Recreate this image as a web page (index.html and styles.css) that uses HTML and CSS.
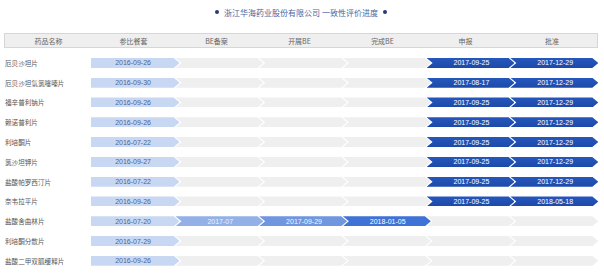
FILE: index.html
```html
<!DOCTYPE html>
<html lang="zh">
<head>
<meta charset="utf-8">
<link rel="stylesheet" href="styles.css">
</head>
<body>
<div class="page">
  <div class="title"><span class="dot"></span><span>浙江华海药业股份有限公司 一致性评价进度</span><span class="dot"></span></div>
  <div class="head">
    <div>药品名称</div><div>参比餐套</div><div>BE备案</div><div>开展BE</div><div>完成BE</div><div>申报</div><div>批准</div>
  </div>
  <div class="rows">
    <div class="row"><div class="name">厄贝沙坦片</div><div class="cv first lb">2016-09-26</div><div class="cv g"></div><div class="cv g"></div><div class="cv g"></div><div class="cv db">2017-09-25</div><div class="cv db">2017-12-29</div></div>
    <div class="row"><div class="name">厄贝沙坦氢氯噻嗪片</div><div class="cv first lb">2016-09-30</div><div class="cv g"></div><div class="cv g"></div><div class="cv g"></div><div class="cv db">2017-08-17</div><div class="cv db">2017-12-29</div></div>
    <div class="row"><div class="name">福辛普利钠片</div><div class="cv first lb">2016-09-26</div><div class="cv g"></div><div class="cv g"></div><div class="cv g"></div><div class="cv db">2017-09-25</div><div class="cv db">2017-12-29</div></div>
    <div class="row"><div class="name">赖诺普利片</div><div class="cv first lb">2016-09-26</div><div class="cv g"></div><div class="cv g"></div><div class="cv g"></div><div class="cv db">2017-09-25</div><div class="cv db">2017-12-29</div></div>
    <div class="row"><div class="name">利培酮片</div><div class="cv first lb">2016-07-22</div><div class="cv g"></div><div class="cv g"></div><div class="cv g"></div><div class="cv db">2017-09-25</div><div class="cv db">2017-12-29</div></div>
    <div class="row"><div class="name">氯沙坦钾片</div><div class="cv first lb">2016-09-27</div><div class="cv g"></div><div class="cv g"></div><div class="cv g"></div><div class="cv db">2017-09-25</div><div class="cv db">2017-12-29</div></div>
    <div class="row"><div class="name">盐酸帕罗西汀片</div><div class="cv first lb">2016-07-22</div><div class="cv g"></div><div class="cv g"></div><div class="cv g"></div><div class="cv db">2017-09-25</div><div class="cv db">2017-12-29</div></div>
    <div class="row"><div class="name">奈韦拉平片</div><div class="cv first lb">2016-09-26</div><div class="cv g"></div><div class="cv g"></div><div class="cv g"></div><div class="cv db">2017-09-25</div><div class="cv db">2018-05-18</div></div>
    <div class="row"><div class="name">盐酸舍曲林片</div><div class="cv first lb">2016-07-20</div><div class="cv b1">2017-07</div><div class="cv b2">2017-09-29</div><div class="cv b3">2018-01-05</div><div class="cv g"></div><div class="cv g"></div></div>
    <div class="row"><div class="name">利培酮分散片</div><div class="cv first lb">2016-07-29</div><div class="cv g"></div><div class="cv g"></div><div class="cv g"></div><div class="cv g"></div><div class="cv g"></div></div>
    <div class="row"><div class="name">盐酸二甲双胍缓释片</div><div class="cv first lb">2016-09-26</div><div class="cv g"></div><div class="cv g"></div><div class="cv g"></div><div class="cv g"></div><div class="cv g"></div></div>
  </div>
</div>
</body>
</html>
```
FILE: styles.css
```css
* { box-sizing: border-box; }
html, body { margin: 0; padding: 0; background: #fff; }
body { font-family: "Noto Sans CJK SC", "Noto Sans", sans-serif; }
.page { width: 604px; height: 274px; padding: 0 6px 0 4px; }
.title {
  height: 33px;
  display: flex; align-items: center; justify-content: center;
  gap: 5px;
  padding-top: 0; padding-bottom: 9px;
  font-size: 8px; color: #4a66a0;
}
.dot { width: 4px; height: 4px; border-radius: 50%; background: #26397a; }
.head {
  display: grid;
  grid-template-columns: 87px repeat(5, 83px) 1fr;
  height: 15px;
  background: #efefef;
  border: 1px solid #d6d6d6;
  font-size: 7px; color: #666;
  align-items: center;
  text-align: center;
}
.rows { padding-top: 5px; }
.row { display: flex; align-items: center; height: 19.8px; }
.name { width: 87px; padding-left: 1px; font-size: 6.6px; color: #555; }
.cv {
  height: 10px; width: 88px; margin-left: -4px;
  display: flex; align-items: center; justify-content: center;
  font-family: "Liberation Sans", "Noto Sans", sans-serif;
  font-size: 7px; padding-left: 2px;
  clip-path: polygon(0 0, 82px 0, 88px 50%, 82px 100%, 0 100%, 6px 50%);
}
.cv.first { width: 89px; margin-left: 0; padding-left: 0; padding-right: 4px;
  clip-path: polygon(0 0, 83px 0, 89px 50%, 83px 100%, 0 100%); }
.g { background: #efefef; }
.lb { background: #c9d8f2; color: #4b6594; }
.b1 { background: #93b1e6; color: #eef3fc; }
.b2 { background: #6f96df; color: #f4f7fd; }
.b3 { background: #3f72d6; color: #fff; }
.db { background: linear-gradient(#2657bd, #1d4aa9); color: #fff; }
```
